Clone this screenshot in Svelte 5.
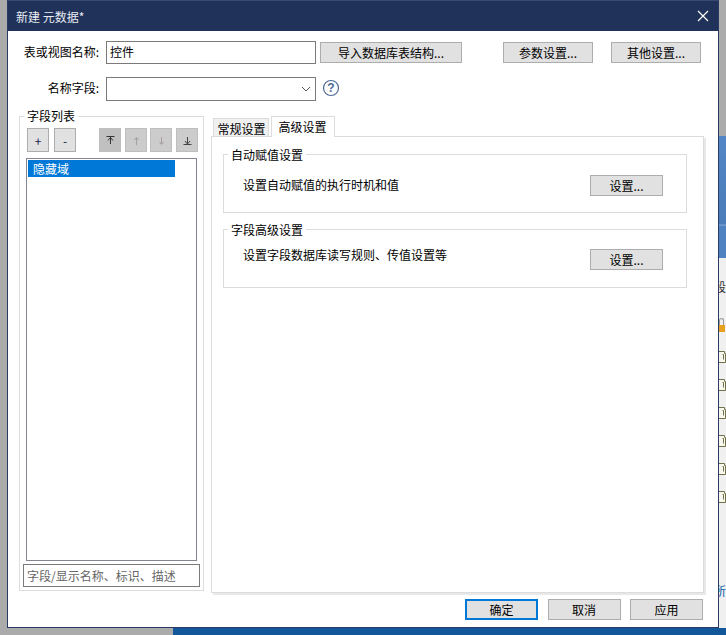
<script lang="ts">
  const moveButtons = [
    { id: 'top', path: 'M3.5 3.5h8M7.5 4v7M7.5 4.5L5 7.5M7.5 4.5L10 7.5', color: '#333' },
    { id: 'up', path: 'M7.5 12V5M5.5 7l2-2.5 2 2.5', color: '#a5a0a0' },
    { id: 'down', path: 'M7.5 4v7M5.5 9l2 2.5 2-2.5', color: '#a89c9c' },
    { id: 'bottom', path: 'M3.5 11.5h8M7.5 4v7M5 8l2.5 3L10 8', color: '#444' }
  ]
  const docRows = [351, 379, 407, 435, 463, 491]
</script>

<div class="desktop">
  <div class="strip-blue"></div>
  <div class="strip-side">
    <span class="side-text first">段</span>
    <span class="lock"></span>
    {#each docRows as top}
      <svg class="doc" style="top: {top - 258}px" width="7" height="12" viewBox="0 0 7 12">
        <path d="M0 .5h5.5v2h1v9H0M3.5 3.5h1v5" stroke="#70704a" fill="#f8f8ee" />
      </svg>
    {/each}
    <span class="side-text last">所</span>
  </div>
  <div class="strip-bottom"></div>

  <section class="dialog">
    <header class="titlebar">
      <span>新建 元数据*</span>
      <svg class="close" width="14" height="14" viewBox="0 0 14 14">
        <path d="M2 2l10 10M12 2L2 12" stroke="#fff" stroke-width="1.2" fill="none" />
      </svg>
    </header>

    <div class="body">
      <div class="row first-row">
        <label class="row-label" for="table-name">表或视图名称:</label>
        <input id="table-name" class="text-input" value="控件" />
        <button class="btn import">导入数据库表结构...</button>
        <button class="btn params">参数设置...</button>
        <button class="btn other">其他设置...</button>
      </div>

      <div class="row second-row">
        <label class="row-label" for="name-field">名称字段:</label>
        <div id="name-field" class="select">
          <svg width="10" height="6" viewBox="0 0 10 6">
            <path d="M1 1l4 4 4-4" stroke="#555" fill="none" />
          </svg>
        </div>
        <svg class="help" width="18" height="18" viewBox="0 0 18 18">
          <circle cx="9" cy="9" r="7.5" stroke="#4a6a94" stroke-width="1.2" fill="none" />
          <text x="9" y="13" text-anchor="middle" class="help-mark">?</text>
        </svg>
      </div>

      <div class="columns">
        <div class="fields">
          <span class="fields-legend">字段列表</span>
          <div class="tools">
            <button class="tool add">+</button>
            <button class="tool add">-</button>
            <div class="move-group">
              {#each moveButtons as b (b.id)}
                <button class="tool move" class:pressed={b.id === 'top'}>
                  <svg width="15" height="15" viewBox="0 0 15 15">
                    <path d={b.path} stroke={b.color} fill="none" />
                  </svg>
                </button>
              {/each}
            </div>
          </div>
          <ul class="list">
            <li class="selected">隐藏域</li>
          </ul>
          <div class="search">字段/显示名称、标识、描述</div>
        </div>

        <div class="settings">
          <div class="tabs">
            <div class="tab">常规设置</div>
            <div class="tab active">高级设置</div>
          </div>
          <div class="panel">
            <div class="group">
              <span class="group-legend">自动赋值设置</span>
              <div class="group-row auto">
                <span>设置自动赋值的执行时机和值</span>
                <button class="btn small">设置...</button>
              </div>
            </div>
            <div class="group">
              <span class="group-legend">字段高级设置</span>
              <div class="group-row adv">
                <span>设置字段数据库读写规则、传值设置等</span>
                <button class="btn small">设置...</button>
              </div>
            </div>
          </div>
        </div>
      </div>

      <div class="footer">
        <button class="btn small primary">确定</button>
        <button class="btn small">取消</button>
        <button class="btn small">应用</button>
      </div>
    </div>
  </section>
</div>

<style>
  :global(body) {
    margin: 0;
    background: #ababab;
  }

  .desktop {
    position: relative;
    width: 726px;
    height: 635px;
    overflow: hidden;
    background: #ababab;
    font-family: "Noto Sans CJK SC", "Liberation Sans", sans-serif;
    font-size: 12px;
    color: #000;
  }

  .strip-blue {
    position: absolute;
    left: 700px;
    top: 136px;
    width: 26px;
    height: 122px;
    background: linear-gradient(#5286c6, #4a7cb8 72%, #7fa3cf 73%, #4f82c0 74%);
  }

  .strip-side {
    position: absolute;
    left: 700px;
    top: 258px;
    width: 26px;
    height: 370px;
    background: #f0f0f0;
  }

  .strip-bottom {
    position: absolute;
    left: 173px;
    top: 628px;
    width: 553px;
    height: 7px;
    background: #12579a;
  }

  .side-text {
    position: absolute;
    left: 14px;
    line-height: 14px;
    color: #333;
  }

  .side-text.first {
    top: 22px;
  }

  .side-text.last {
    top: 326px;
    color: #0b5fa5;
  }

  .lock {
    position: absolute;
    left: 19px;
    top: 67px;
    width: 6px;
    height: 7px;
    background: #e8a020;
  }

  .lock::before {
    content: "";
    position: absolute;
    left: 0;
    top: -7px;
    width: 3px;
    height: 6px;
    border: 1px solid #999;
    border-bottom: 0;
    border-radius: 3px 3px 0 0;
  }

  .doc {
    position: absolute;
    left: 19px;
  }

  .dialog {
    position: absolute;
    left: 7px;
    top: 0;
    width: 710px;
    height: 626px;
    border: 1px solid #2b3a63;
    border-top-color: #3a4a6e;
    background: #fff;
    display: flex;
    flex-direction: column;
  }

  .titlebar {
    height: 30px;
    flex: none;
    background: #203259;
    color: #e8ebf2;
    display: flex;
    align-items: center;
    justify-content: space-between;
    padding: 0 8px;
  }

  .body {
    flex: 1;
    padding: 10px 13px 0 11px;
    display: flex;
    flex-direction: column;
  }

  .row {
    display: flex;
    align-items: center;
  }

  .row-label {
    width: 80px;
    margin-right: 7px;
    padding-bottom: 3px;
    text-align: right;
    white-space: nowrap;
  }

  .first-row {
    height: 23px;
  }

  .second-row {
    height: 24px;
    margin-top: 13px;
  }

  .text-input {
    box-sizing: border-box;
    width: 210px;
    height: 23px;
    border: 1px solid #7a7a7a;
    padding: 0 3px 3px;
    font: inherit;
    color: #000;
    outline: none;
  }

  .select {
    box-sizing: border-box;
    width: 210px;
    height: 24px;
    border: 1px solid #7a7a7a;
    display: flex;
    align-items: center;
    justify-content: flex-end;
    padding-right: 4px;
  }

  .help {
    margin-left: 6px;
    margin-bottom: 2px;
  }

  .help-mark {
    font-family: "Liberation Sans", sans-serif;
    font-size: 12px;
    font-weight: bold;
    fill: #4a6a94;
  }

  .btn {
    box-sizing: border-box;
    height: 21px;
    border: 1px solid #adadad;
    background: #e1e1e1;
    font: inherit;
    color: #000;
    padding: 0 0 1px;
    white-space: nowrap;
  }

  .import {
    width: 142px;
    margin-left: 4px;
  }

  .params {
    width: 90px;
    margin-left: 41px;
  }

  .other {
    width: 90px;
    margin-left: 18px;
  }

  .small {
    width: 73px;
  }

  .columns {
    display: flex;
    margin-top: 15px;
    height: 477px;
  }

  .fields {
    box-sizing: border-box;
    flex: none;
    width: 185px;
    height: 475px;
    border: 1px solid #dcdcdc;
    position: relative;
    padding: 11px 3px 3px;
    display: flex;
    flex-direction: column;
  }

  .fields-legend {
    position: absolute;
    left: 4px;
    top: -9px;
    padding: 0 3px;
    background: #fff;
    line-height: 16px;
  }

  .tools {
    display: flex;
    padding-left: 4px;
    height: 24px;
  }

  .tool {
    box-sizing: border-box;
    width: 22px;
    height: 24px;
    padding: 0;
    border: 1px solid #adadad;
    background: #e1e1e1;
    font: inherit;
    color: #14204a;
    display: flex;
    align-items: center;
    justify-content: center;
  }

  .tool.add {
    margin-right: 5px;
  }

  .move-group {
    display: flex;
    gap: 4px;
    margin-left: 18px;
  }

  .move {
    background: #cccccc;
    border-color: #bfbfbf;
  }

  .move:nth-child(3) {
    margin-left: -1px;
  }

  .move.pressed {
    background: #c0c0c0;
  }

  .list {
    box-sizing: border-box;
    list-style: none;
    margin: 6px 3px 0;
    padding: 1px;
    height: 403px;
    flex: none;
    border: 1px solid #82878f;
  }

  .selected {
    width: 147px;
    height: 17px;
    line-height: 18px;
    padding-left: 5px;
    box-sizing: border-box;
    background: #0078d7;
    color: #fff;
  }

  .search {
    box-sizing: border-box;
    height: 23px;
    margin-top: 3px;
    border: 1px solid #7a7a7a;
    padding-left: 3px;
    line-height: 21px;
    color: #666;
  }

  .settings {
    flex: none;
    width: 493px;
    margin-left: 7px;
    display: flex;
    flex-direction: column;
  }

  .tabs {
    display: flex;
    align-items: flex-end;
    height: 20px;
    padding-left: 2px;
    box-sizing: border-box;
  }

  .tab {
    box-sizing: border-box;
    width: 56px;
    height: 18px;
    line-height: 19px;
    padding-left: 1px;
    text-align: center;
    background: #f0f0f0;
    border: 1px solid #dcdcdc;
    border-bottom: 0;
  }

  .tab.active {
    width: 64px;
    height: 21px;
    line-height: 19px;
    padding: 0 1px 0 0;
    margin-left: 2px;
    margin-bottom: -1px;
    background: #fff;
    position: relative;
    z-index: 1;
  }

  .panel {
    box-sizing: border-box;
    width: 493px;
    height: 457px;
    border: 1px solid #dcdcdc;
    box-shadow: 2px 2px 0 #e8e8e8;
    padding: 17px 16px 0 11px;
    background: #fff;
  }

  .group {
    position: relative;
    box-sizing: border-box;
    height: 59px;
    border: 1px solid #dcdcdc;
    margin-bottom: 16px;
  }

  .group-legend {
    position: absolute;
    left: 4px;
    top: -8px;
    padding: 0 3px;
    background: #fff;
    line-height: 16px;
  }

  .group-row {
    display: flex;
    justify-content: space-between;
    padding: 0 23px 0 19px;
  }

  .group-row span {
    line-height: 16px;
  }

  .group-row.auto {
    padding-top: 20px;
  }

  .group-row.adv {
    padding-top: 19px;
  }

  .group-row.auto span {
    margin-top: 2px;
  }

  .group-row.adv span {
    margin-top: -2px;
  }

  .footer {
    display: flex;
    gap: 9.5px;
    justify-content: flex-end;
    padding-right: 2px;
    margin-top: 6px;
  }

  .primary {
    border: 2px solid #0078d7;
  }

  .close {
    flex: none;
  }
</style>
